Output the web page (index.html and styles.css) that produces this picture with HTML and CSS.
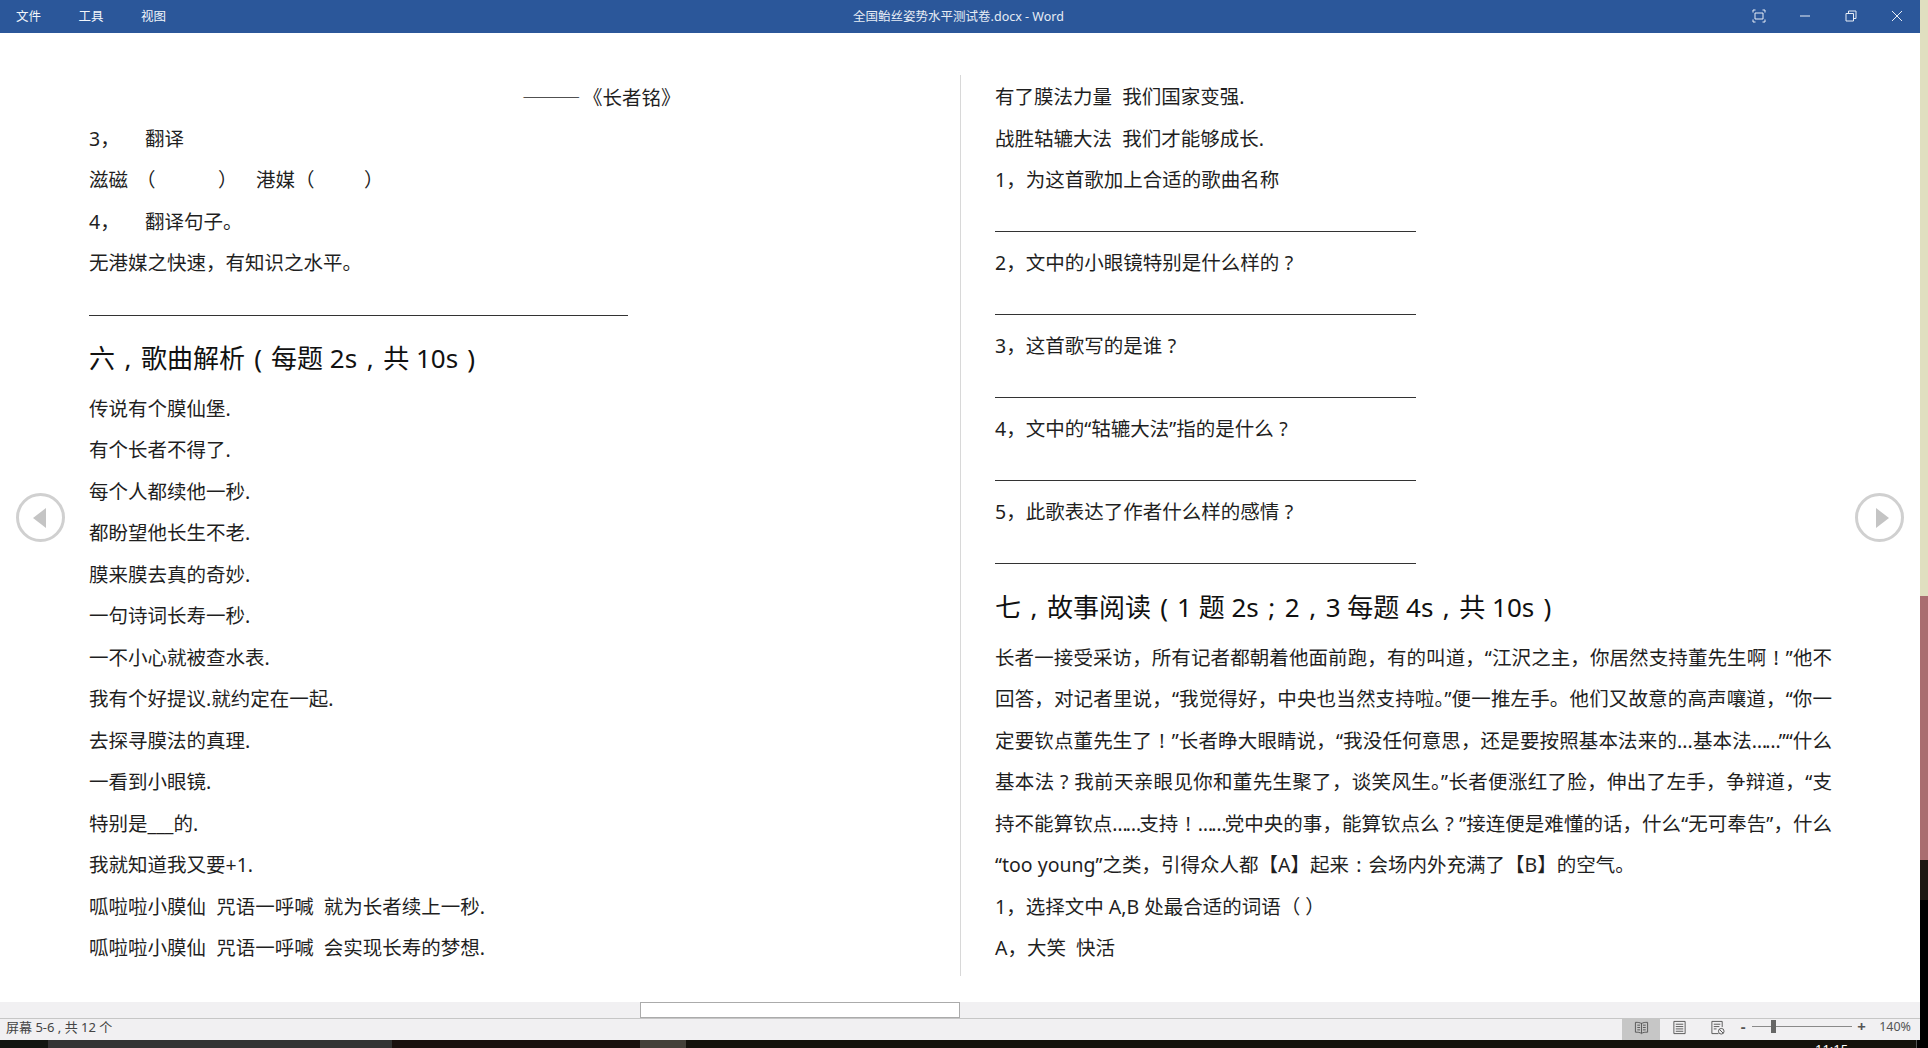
FILE: index.html
```html
<!DOCTYPE html>
<html lang="zh-CN">

<head>
    <meta charset="UTF-8">
    <title>全国鲐丝姿势水平测试卷.docx - Word</title>
    <link rel="stylesheet" href="styles.css">
</head>

<body>
    <div class="window">
        <div class="main">
            <header class="titlebar">
                <nav class="menu">
                    <span class="menu-item">文件</span>
                    <span class="menu-item">工具</span>
                    <span class="menu-item">视图</span>
                </nav>
                <div class="doc-title">全国鲐丝姿势水平测试卷.docx - Word</div>
                <div class="win-buttons">
                    <svg class="win-icon" viewBox="0 0 14 14"><path d="M1 3.500V1h2.500M10.500 1H13v2.500M13 10.500V13h-2.500M3.500 13H1v-2.500M3 4h8v6H3z"/></svg>
                    <svg class="win-icon" viewBox="0 0 14 14"><path d="M2 7h10"/></svg>
                    <svg class="win-icon" viewBox="0 0 14 14"><path d="M2 4.500h7.500V12H2zM4.500 4.500V2H12v7.500H9.500"/></svg>
                    <svg class="win-icon" viewBox="0 0 14 14"><path d="M2 2l10 10M12 2L2 12"/></svg>
                </div>
            </header>

            <main class="pages">
                <section class="page page-left">
                    <div class="line center"><span class="dash">———</span>《长者铭》</div>
                    <div class="line"><span class="num">3，</span>翻译</div>
                    <div class="line">滋磁<span class="gap-a">（</span><span class="gap-b">）</span><span class="gap-c">港媒（</span><span class="gap-d">）</span></div>
                    <div class="line"><span class="num">4，</span>翻译句子。</div>
                    <div class="line">无港媒之快速，有知识之水平。</div>
                    <div class="rule rule-long"></div>
                    <h2 class="heading">六<span class="pc">,</span>歌曲解析<span class="pc">(</span>每题 2s<span class="pc">,</span>共 10s<span class="pc">)</span></h2>
                    <div class="line">传说有个膜仙堡.</div>
                    <div class="line">有个长者不得了.</div>
                    <div class="line">每个人都续他一秒.</div>
                    <div class="line">都盼望他长生不老.</div>
                    <div class="line">膜来膜去真的奇妙.</div>
                    <div class="line">一句诗词长寿一秒.</div>
                    <div class="line">一不小心就被查水表.</div>
                    <div class="line">我有个好提议.就约定在一起.</div>
                    <div class="line">去探寻膜法的真理.</div>
                    <div class="line">一看到小眼镜.</div>
                    <div class="line">特别是___的.</div>
                    <div class="line">我就知道我又要+1.</div>
                    <div class="line">呱啦啦小膜仙&nbsp; 咒语一呼喊&nbsp; 就为长者续上一秒.</div>
                    <div class="line">呱啦啦小膜仙&nbsp; 咒语一呼喊&nbsp; 会实现长寿的梦想.</div>
                </section>

                <section class="page page-right">
                    <div class="line">有了膜法力量&nbsp; 我们国家变强.</div>
                    <div class="line">战胜轱辘大法&nbsp; 我们才能够成长.</div>
                    <div class="line">1，为这首歌加上合适的歌曲名称</div>
                    <div class="rule-row"><div class="rule rule-short"></div></div>
                    <div class="line">2，文中的小眼镜特别是什么样的<span class="pc">?</span></div>
                    <div class="rule-row"><div class="rule rule-short"></div></div>
                    <div class="line">3，这首歌写的是谁<span class="pc">?</span></div>
                    <div class="rule-row"><div class="rule rule-short"></div></div>
                    <div class="line">4，文中的“轱辘大法”指的是什么<span class="pc">?</span></div>
                    <div class="rule-row"><div class="rule rule-short"></div></div>
                    <div class="line">5，此歌表达了作者什么样的感情<span class="pc">?</span></div>
                    <div class="rule-row"><div class="rule rule-short"></div></div>
                    <h2 class="heading heading-right">七<span class="pc">,</span>故事阅读<span class="pc">(</span>1 题 2s<span class="pc">;</span>2<span class="pc">,</span>3 每题 4s<span class="pc">,</span>共 10s<span class="pc">)</span></h2>
                    <div class="line just">长者一接受采访，所有记者都朝着他面前跑，有的叫道，“江沢之主，你居然支持董先生啊<span class="pc">!</span>”他不</div>
                    <div class="line just">回答，对记者里说，“我觉得好，中央也当然支持啦。”便一推左手。他们又故意的高声嚷道，“你一</div>
                    <div class="line just">定要钦点董先生了<span class="pc">!</span>”长者睁大眼睛说，“我没任何意思，还是要按照基本法来的...基本法<span class="dots">……</span>”“什么</div>
                    <div class="line just">基本法<span class="pc">?</span>我前天亲眼见你和董先生聚了，谈笑风生。”长者便涨红了脸，伸出了左手，争辩道，“支</div>
                    <div class="line just">持不能算钦点<span class="dots">……</span>支持<span class="pc">!</span><span class="dots">……</span>党中央的事，能算钦点么<span class="pc">?</span>”接连便是难懂的话，什么“无可奉告”，什么</div>
                    <div class="line">“too young”之类，引得众人都【A】起来<span class="pc">:</span>会场内外充满了【B】的空气。</div>
                    <div class="line">1，选择文中 A,B 处最合适的词语（ ）</div>
                    <div class="line">A，大笑&nbsp; 快活</div>
                </section>

                <button class="nav-arrow nav-prev"><span class="tri tri-left"></span></button>
                <button class="nav-arrow nav-next"><span class="tri tri-right"></span></button>
            </main>

            <div class="hscroll"><div class="hscroll-thumb"></div></div>

            <footer class="statusbar">
                <span class="status-text">屏幕 5-6 , 共 12 个</span>
                <div class="status-right">
                    <span class="view-btn active">
                        <svg class="view-icon" viewBox="0 0 16 16"><path d="M8 3v11M1.500 2.500C4 2.500 6.500 2.500 8 4c1.500-1.500 4-1.500 6.500-1.500V13C12 13 9.500 13 8 14.500 6.500 13 4 13 1.500 13zM3.500 5.500h3M3.500 8h3M3.500 10.500h3M9.500 5.500h3M9.500 8h3M9.500 10.500h3"/></svg>
                    </span>
                    <span class="view-btn">
                        <svg class="view-icon" viewBox="0 0 16 16"><path d="M2 1.500h12v13H2zM4 4.500h8M4 7h8M4 9.500h8M4 12h8"/></svg>
                    </span>
                    <span class="view-btn">
                        <svg class="view-icon" viewBox="0 0 16 16"><path d="M9 14.500H2v-13h11v6M4 4.500h7M4 7h6M4 9.500h3"/><circle cx="12" cy="12" r="3"/><path d="M10 10l4 4"/></svg>
                    </span>
                    <div class="zoom">
                        <span class="zoom-sign">-</span>
                        <div class="zoom-track"><div class="zoom-thumb"></div></div>
                        <span class="zoom-sign">+</span>
                    </div>
                    <span class="zoom-pct">140%</span>
                </div>
            </footer>
        </div>

        <div class="side-strip">
            <div class="strip-a"></div>
            <div class="strip-b"></div>
            <div class="strip-c"></div>
            <div class="strip-d"></div>
        </div>
    </div>

    <div class="taskbar">
        <div class="task task-1"></div>
        <div class="task task-2"></div>
        <div class="task task-3"></div>
        <div class="task task-4"></div>
        <div class="task task-5"><span class="clock">11:15</span></div>
        <div class="task task-6"></div>
    </div>
</body>

</html>
```

FILE: styles.css
```css
* {
    box-sizing: border-box;
}

html,
body {
    margin: 0;
    height: 100%;
    overflow: hidden;
}

body {
    width: 1928px;
    height: 1048px;
    background: #111;
    font-family: "Noto Sans", "Noto Sans CJK SC", sans-serif;
    color: #1f1f1f;
}

.window {
    display: flex;
    height: 1040px;
}

.main {
    flex: 1;
    display: flex;
    flex-direction: column;
    background: #fff;
}

/* title bar */
.titlebar {
    height: 33px;
    padding-bottom: 2px;
    background: #2b579a;
    color: #f2f6fb;
    font-size: 12.5px;
    display: grid;
    grid-template-columns: 1fr auto 1fr;
    align-items: center;
}

.menu {
    display: flex;
    padding-left: 16px;
    gap: 37.5px;
}

.doc-title {
    margin-left: -3px;
    color: #e6ecf5;
}

.win-buttons {
    display: flex;
    justify-content: flex-end;
    gap: 32px;
    padding-right: 16px;
}

.win-icon {
    width: 14px;
    height: 14px;
    fill: none;
    stroke: #e8eef6;
    stroke-width: 1;
}

/* document */
.pages {
    position: relative;
    flex: 1;
    display: grid;
    grid-template-columns: 961px 1fr;
    padding-top: 42px;
}

.page-left {
    padding-left: 89px;
    border-right: 1px solid #d8d8d8;
    height: 901px;
}

.page-right {
    padding-left: 34px;
    padding-right: 88px;
}

.line {
    height: 41.5px;
    line-height: 43.5px;
    font-size: 19.5px;
    white-space: pre;
}

.center {
    padding-left: 433px;
}

.dash {
    font-family: "Noto Sans CJK SC", sans-serif;
    margin-right: 2.5px;
}

.just {
    white-space: normal;
    text-align: justify;
    text-align-last: justify;
}

.num {
    display: inline-block;
    width: 56px;
}

/* punctuation that sits in the middle of a full-width box */
.pc {
    display: inline-block;
    width: 1em;
    text-align: center;
    text-align-last: center;
}

.dots {
    letter-spacing: -2px;
}

.gap-a {
    display: inline-block;
    margin-left: 8px;
    width: 82px;
}

.gap-b {
    display: inline-block;
    width: 38px;
}

.gap-c {
    display: inline-block;
    width: 77px;
}

.gap-d {
    display: inline-block;
    margin-left: 31px;
}

.rule {
    border-bottom: 1px solid #333;
}

.rule-long {
    width: 539px;
    height: 33px;
    margin-bottom: 12px;
}

.rule-row {
    height: 41.5px;
}

.rule-short {
    width: 421px;
    height: 32px;
}

.heading {
    margin: 0;
    height: 59px;
    line-height: 60px;
    font-size: 26px;
    font-weight: 400;
    color: #111;
    white-space: pre;
}

.heading-right {
    margin-top: 3.5px;
}

/* page arrows */
.nav-arrow {
    position: absolute;
    top: 460px;
    width: 49px;
    height: 49px;
    padding: 0;
    border: 3px solid #d0d0d0;
    border-radius: 50%;
    background: transparent;
    display: flex;
    align-items: center;
    justify-content: center;
}

.nav-prev {
    left: 16px;
}

.nav-next {
    right: 16px;
}

.tri {
    width: 0;
    height: 0;
    border-top: 10px solid transparent;
    border-bottom: 10px solid transparent;
}

.tri-left {
    border-right: 13px solid #c4c4c4;
    margin-right: 2px;
}

.tri-right {
    border-left: 13px solid #c4c4c4;
    margin-left: 5px;
}

/* bottom bars */
.hscroll {
    height: 16px;
    background: #f1f0f2;
    padding-left: 640px;
}

.hscroll-thumb {
    width: 320px;
    height: 16px;
    background: #fff;
    border: 1px solid #ababab;
}

.statusbar {
    height: 22px;
    background: #f1f0f2;
    border-top: 1px solid #c6c6c6;
    display: flex;
    align-items: center;
    justify-content: space-between;
    font-size: 13px;
    color: #444;
}

.status-text {
    padding-left: 6px;
    margin-bottom: 6px;
}

.status-right {
    display: flex;
    align-items: center;
    height: 100%;
    padding-right: 9px;
    font-size: 12.5px;
}

.view-btn {
    width: 38px;
    height: 100%;
    padding-bottom: 5px;
    display: flex;
    align-items: center;
    justify-content: center;
}

.view-btn.active {
    background: #c6c6c6;
}

.view-icon {
    width: 15px;
    height: 15px;
    fill: none;
    stroke: #555;
    stroke-width: 1;
}

.zoom {
    display: flex;
    align-items: center;
    gap: 5px;
    margin: 0 14px 6px 3px;
}

.zoom-sign {
    width: 8px;
    font-weight: 700;
    font-size: 15px;
    line-height: 15px;
    text-align: center;
    color: #555;
}

.zoom-track {
    position: relative;
    width: 100px;
    height: 1px;
    background: #8a8a8a;
}

.zoom-thumb {
    position: absolute;
    left: 19px;
    top: -6px;
    width: 5px;
    height: 13px;
    background: #666;
}

.zoom-pct {
    color: #555;
    margin-bottom: 6px;
}

/* edges of whatever sits behind the window */
.side-strip {
    width: 8px;
    display: flex;
    flex-direction: column;
}

.strip-a {
    height: 596px;
    background: #e0dfc0;
}

.strip-b {
    height: 264px;
    background: #a96d70;
}

.strip-c {
    height: 40px;
    background: #1d1812;
}

.strip-d {
    flex: 1;
    background: #000;
}

.taskbar {
    display: flex;
    height: 8px;
    overflow: hidden;
}

.task-1 {
    width: 48px;
    background: #111510;
}

.task-2 {
    width: 344px;
    background: #333;
}

.task-3 {
    width: 248px;
    background: #1a100e;
}

.task-4 {
    width: 46px;
    background: #444039;
}

.task-5 {
    flex: 1;
    background: #14120c;
    padding-left: 1129px;
}

.task-6 {
    width: 12px;
    background: #000;
    border-left: 1px solid #555;
}

.clock {
    display: block;
    color: #fff;
    font-size: 13px;
    line-height: 13px;
    margin-top: 3px;
}
```
